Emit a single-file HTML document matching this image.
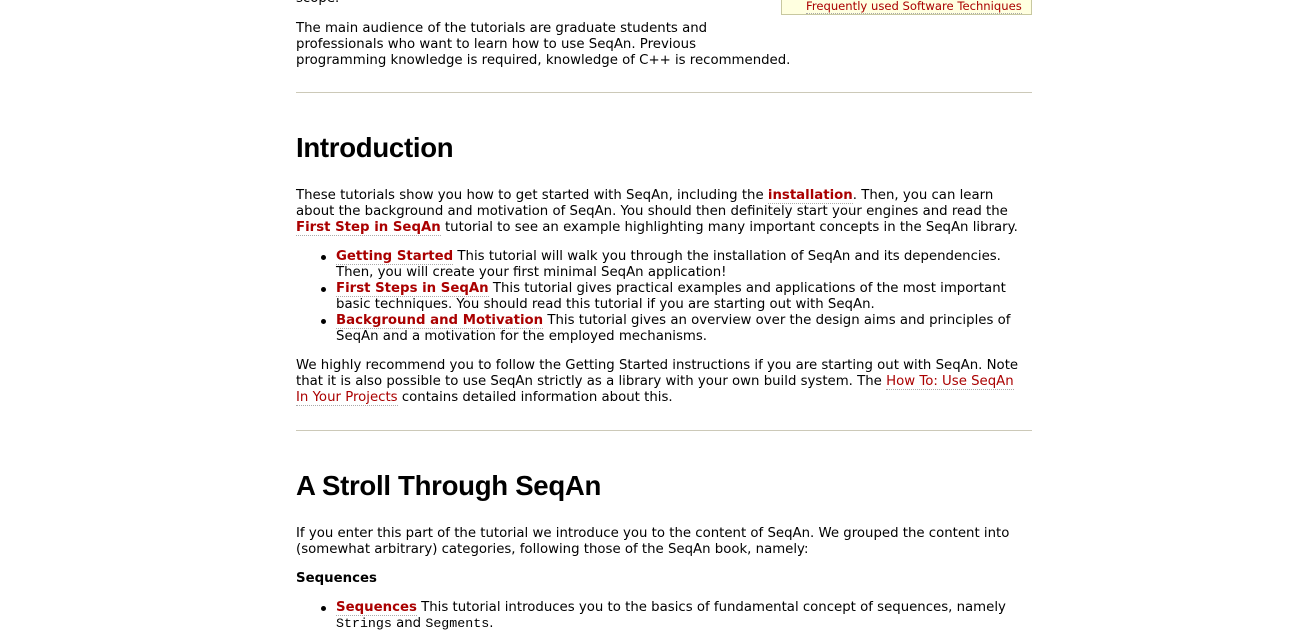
<!DOCTYPE html>
<html><head><meta charset="utf-8"><style>
body{margin:0;background:#fff;width:1310px;height:626px;overflow:hidden;position:relative;font-family:"DejaVu Sans","Liberation Sans",sans-serif;font-size:13.3px;color:#000}
.l{position:absolute;left:296px;line-height:16px;white-space:nowrap}
.i{left:336px}
a{color:#a00;text-decoration:none;border-bottom:1px dotted #aaa}
.hr{position:absolute;left:296px;width:736px;height:1px;background:#ccc9b8}
h1{position:absolute;left:296px;margin:0;font-family:"Liberation Sans",sans-serif;font-weight:bold;font-size:27.6px;line-height:32px;letter-spacing:-0.3px}
.dot{position:absolute;left:321px;width:5px;height:5px;border-radius:50%;background:#000}
.side{position:absolute;left:781px;top:-10px;width:249px;height:24px;background:#ffffe0;border:1px solid #c8c8a0;border-top:none}
.mono{font-family:"Liberation Mono",monospace}
</style></head><body>
<div class="l" style="top:-9px">scope.</div>
<div class="side"></div>
<div class="l" style="left:806px;top:-2px;font-size:11.6px"><a>Frequently used Software Techniques</a></div>
<div class="l" style="top:21px">The main audience of the tutorials are graduate students and</div>
<div class="l" style="top:37px">professionals who want to learn how to use SeqAn. Previous</div>
<div class="l" style="top:53px">programming knowledge is required, knowledge of C++ is recommended.</div>
<div class="hr" style="top:92px"></div>
<h1 style="top:132px">Introduction</h1>
<div class="l" style="top:188px">These tutorials show you how to get started with SeqAn, including the <a><b>installation</b></a>. Then, you can learn</div>
<div class="l" style="top:204px">about the background and motivation of SeqAn. You should then definitely start your engines and read the</div>
<div class="l" style="top:220px"><a><b>First Step in SeqAn</b></a> tutorial to see an example highlighting many important concepts in the SeqAn library.</div>
<div class="dot" style="top:255px"></div>
<div class="l i" style="top:249px"><a><b>Getting Started</b></a> This tutorial will walk you through the installation of SeqAn and its dependencies.</div>
<div class="l i" style="top:265px">Then, you will create your first minimal SeqAn application!</div>
<div class="dot" style="top:287px"></div>
<div class="l i" style="top:281px"><a><b>First Steps in SeqAn</b></a> This tutorial gives practical examples and applications of the most important</div>
<div class="l i" style="top:297px">basic techniques. You should read this tutorial if you are starting out with SeqAn.</div>
<div class="dot" style="top:319px"></div>
<div class="l i" style="top:313px"><a><b>Background and Motivation</b></a> This tutorial gives an overview over the design aims and principles of</div>
<div class="l i" style="top:329px">SeqAn and a motivation for the employed mechanisms.</div>
<div class="l" style="top:358px">We highly recommend you to follow the Getting Started instructions if you are starting out with SeqAn. Note</div>
<div class="l" style="top:374px">that it is also possible to use SeqAn strictly as a library with your own build system. The <a>How To: Use SeqAn</a></div>
<div class="l" style="top:390px"><a>In Your Projects</a> contains detailed information about this.</div>
<div class="hr" style="top:430px"></div>
<h1 style="top:470px">A Stroll Through SeqAn</h1>
<div class="l" style="top:526px">If you enter this part of the tutorial we introduce you to the content of SeqAn. We grouped the content into</div>
<div class="l" style="top:542px">(somewhat arbitrary) categories, following those of the SeqAn book, namely:</div>
<div class="l" style="top:571px;font-weight:bold">Sequences</div>
<div class="dot" style="top:606px"></div>
<div class="l i" style="top:600px"><a><b>Sequences</b></a> This tutorial introduces you to the basics of fundamental concept of sequences, namely</div>
<div class="l i" style="top:616px"><span class="mono">Strings</span> and <span class="mono">Segments</span>.</div>
</body></html>
